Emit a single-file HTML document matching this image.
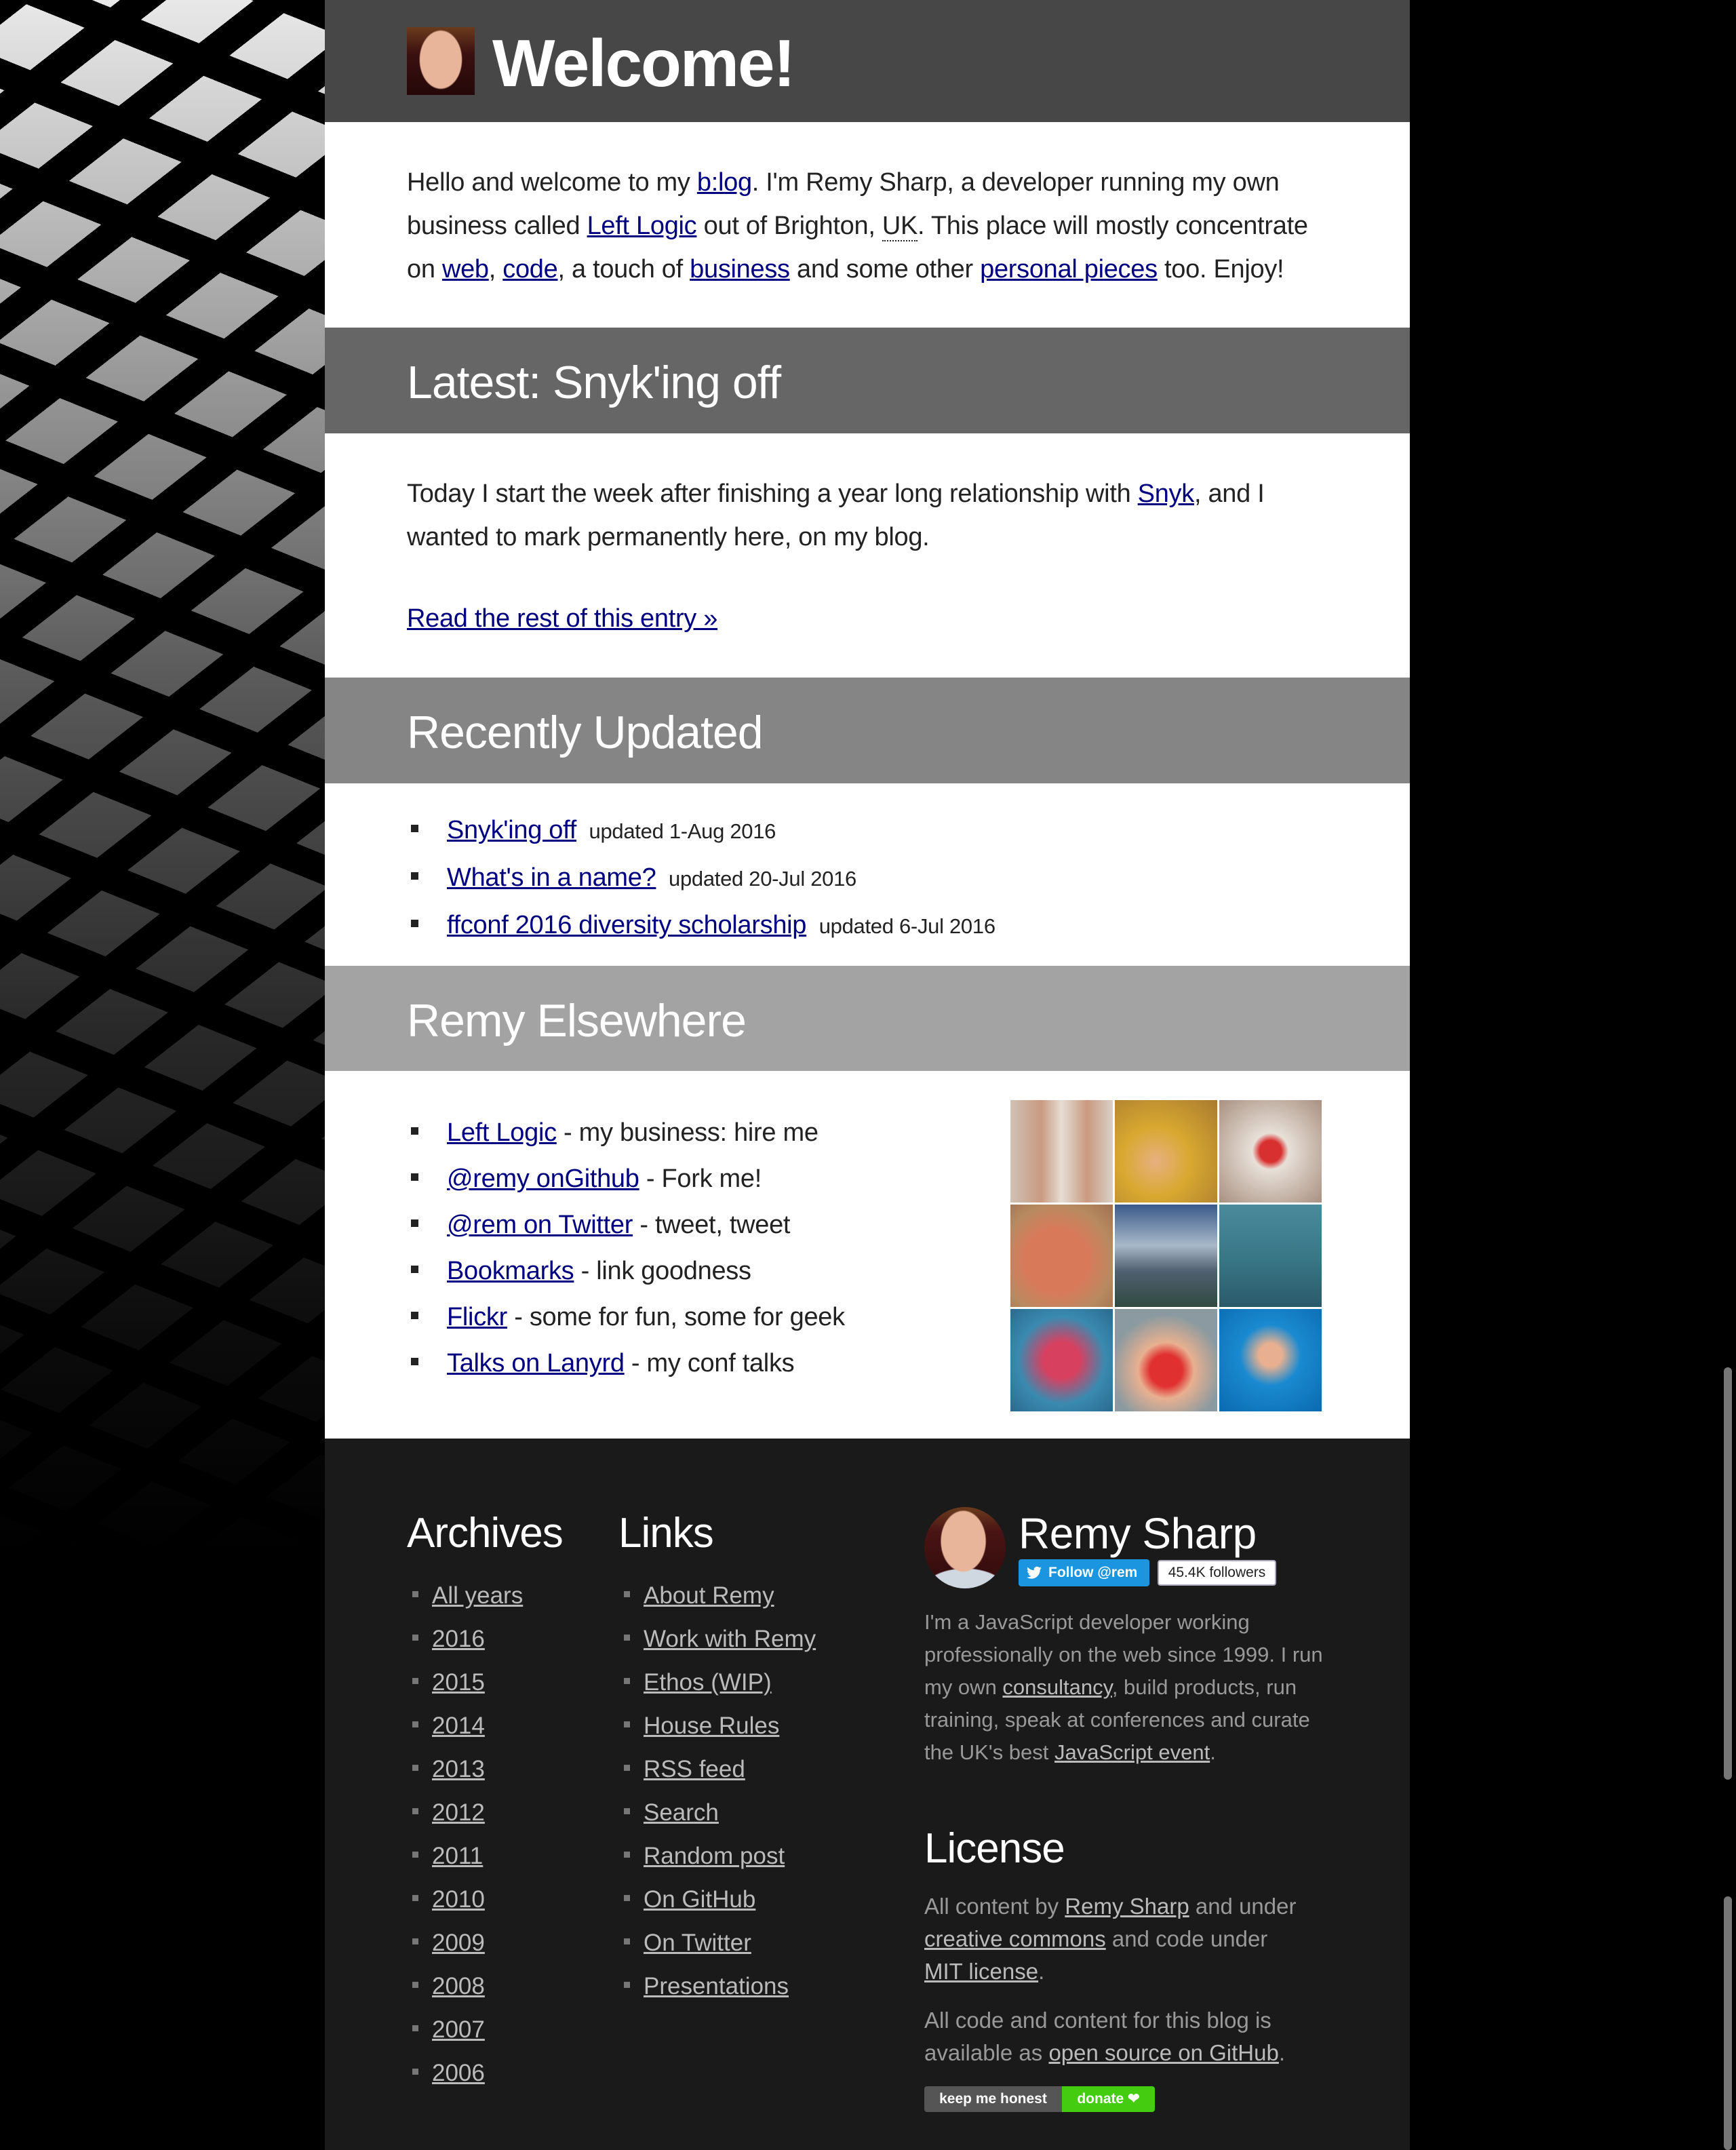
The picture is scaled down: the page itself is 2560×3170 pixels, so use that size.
<!DOCTYPE html>
<html><head><meta charset="utf-8">
<style>
*{margin:0;padding:0;box-sizing:border-box}
html,body{width:2560px;height:3170px;overflow:hidden;background:#000;font-family:"Liberation Sans",Arial,sans-serif}
#bgl{position:absolute;left:0;top:0;width:479px;height:3170px;
background:
repeating-linear-gradient(22deg,transparent 0 88px,#000 88px 130px),
repeating-linear-gradient(-38deg,transparent 0 80px,#000 80px 122px),
linear-gradient(to bottom,#e8e8e8 0,#a0a0a0 500px,#5a5a5a 1000px,#2a2a2a 1500px,#0a0a0a 2000px,#000 2300px);}
#main{position:absolute;left:479px;top:0;width:1600px;height:3170px;background:#1a1a1a}
.band{position:relative;color:#fff;padding-left:121px}
.white{background:#fff;position:relative;padding-left:121px;color:#222}
a{color:#000080;text-decoration:underline}
.p{font-size:38px;line-height:64px;letter-spacing:-0.3px}
h2{font-weight:normal;font-size:68px;letter-spacing:-1px}
ul{list-style:none}
.sq{display:inline-block;width:11px;height:11px;background:#222;margin-right:42px;vertical-align:middle;position:relative;top:-4px}
.ft a{color:#bbb}
.ft .sqf{display:inline-block;width:9px;height:9px;background:#777;margin-right:20px;vertical-align:middle;position:relative;top:-4px}
.ft li{font-size:35px;line-height:64px;color:#bbb}
.ft h3{font-weight:normal;font-size:62px;color:#fff;letter-spacing:-1px}
.grid{position:absolute;left:1011px;top:43px;width:460px;height:460px}
.grid div{position:absolute;width:151px;height:151px}
.sb{position:absolute;left:2542px;width:12px;background:#777;border-radius:6px}
</style></head><body>
<div id="bgl"></div>
<div id="main">
 <div class="band" style="background:#474747;height:180px">
  <div style="position:absolute;left:121px;top:40px;width:100px;height:100px;background:radial-gradient(ellipse 32px 44px at 50% 48%,#e8b49a 0 95%,transparent 100%),linear-gradient(#6b3b1d,#3a1010 40%,#250808);"></div>
  <div style="position:absolute;left:247px;top:38px;font-size:98px;font-weight:bold;letter-spacing:-2px;line-height:110px">Welcome!</div>
 </div>
 <div class="white" style="height:303px">
  <div class="p" style="position:absolute;top:57px;left:121px;width:1340px">Hello and welcome to my <a href="#">b:log</a>. I'm Remy Sharp, a developer running my own business called <a href="#">Left Logic</a> out of Brighton, <span style="border-bottom:2px dotted #222">UK</span>. This place will mostly concentrate on <a href="#">web</a>, <a href="#">code</a>, a touch of <a href="#">business</a> and some other <a href="#">personal pieces</a> too. Enjoy!</div>
 </div>
 <div class="band" style="background:#666;height:156px"><h2 style="position:absolute;top:40px;left:121px;line-height:82px">Latest: Snyk'ing off</h2></div>
 <div class="white" style="height:360px">
  <div class="p" style="position:absolute;top:57px;left:121px;width:1300px">Today I start the week after finishing a year long relationship with <a href="#">Snyk</a>, and I wanted to mark permanently here, on my blog.</div>
  <div class="p" style="position:absolute;top:241px;left:121px"><a href="#">Read the rest of this entry »</a></div>
 </div>
 <div class="band" style="background:#858585;height:156px"><h2 style="position:absolute;top:40px;left:121px;line-height:82px">Recently Updated</h2></div>
 <div class="white" style="height:269px">
  <ul style="position:absolute;top:35px;left:127px" class="p">
   <li style="line-height:68px"><span class="sq"></span><a href="#">Snyk'ing off</a> <span style="font-size:31px">&nbsp;updated 1-Aug 2016</span></li>
   <li style="line-height:68px"><span class="sq"></span><a href="#">What's in a name?</a> <span style="font-size:31px">&nbsp;updated 20-Jul 2016</span></li>
   <li style="line-height:68px"><span class="sq"></span><a href="#">ffconf 2016 diversity scholarship</a> <span style="font-size:31px">&nbsp;updated 6-Jul 2016</span></li>
  </ul>
 </div>
 <div class="band" style="background:#a3a3a3;height:155px"><h2 style="position:absolute;top:40px;left:121px;line-height:82px">Remy Elsewhere</h2></div>
 <div class="white" style="height:542px">
  <ul style="position:absolute;top:57px;left:127px" class="p">
   <li style="line-height:68px"><span class="sq"></span><a href="#">Left Logic</a> - my business: hire me</li>
   <li style="line-height:68px"><span class="sq"></span><a href="#">@remy onGithub</a> - Fork me!</li>
   <li style="line-height:68px"><span class="sq"></span><a href="#">@rem on Twitter</a> - tweet, tweet</li>
   <li style="line-height:68px"><span class="sq"></span><a href="#">Bookmarks</a> - link goodness</li>
   <li style="line-height:68px"><span class="sq"></span><a href="#">Flickr</a> - some for fun, some for geek</li>
   <li style="line-height:68px"><span class="sq"></span><a href="#">Talks on Lanyrd</a> - my conf talks</li>
  </ul>
  <div class="grid">
   <div style="left:0;top:0;background:linear-gradient(90deg,#cfc2b5,#c99a80 30%,#e6ddd5 50%,#c99a80 75%,#d9d0c8)"></div>
   <div style="left:154px;top:0;background:radial-gradient(circle at 40% 60%,#e8b080,#d8a830 40%,#a87a30)"></div>
   <div style="left:308px;top:0;background:radial-gradient(circle at 50% 50%,#d83030 0 15%,#e8e0d8 25%,#a89080)"></div>
   <div style="left:0;top:154px;background:radial-gradient(ellipse at 45% 55%,#d87a5a 0 40%,#b88a60 70%,#a07050)"></div>
   <div style="left:154px;top:154px;background:linear-gradient(#3a5a8a,#a8b8c8 40%,#506070 65%,#304a40)"></div>
   <div style="left:308px;top:154px;background:linear-gradient(#4a8a9a,#3a7888 50%,#2a5a6a)"></div>
   <div style="left:0;top:308px;background:radial-gradient(circle at 50% 50%,#d84060 0 25%,#3a8ab0 60%,#2a6a90)"></div>
   <div style="left:154px;top:308px;background:radial-gradient(circle at 50% 60%,#e03030 0 20%,#e8b090 35%,#8a9aa0 70%)"></div>
   <div style="left:308px;top:308px;background:radial-gradient(circle at 50% 45%,#e8b090 0 15%,#1a8ad0 40%,#0a6ab0)"></div>
  </div>
 </div>
 <div class="ft" style="position:relative;height:1049px;background:#1a1a1a">
  <h3 style="position:absolute;left:121px;top:100px;line-height:80px">Archives</h3>
  <ul style="position:absolute;left:129px;top:200px">
   <li><span class="sqf"></span><a href="#">All years</a></li>
   <li><span class="sqf"></span><a href="#">2016</a></li><li><span class="sqf"></span><a href="#">2015</a></li>
   <li><span class="sqf"></span><a href="#">2014</a></li><li><span class="sqf"></span><a href="#">2013</a></li>
   <li><span class="sqf"></span><a href="#">2012</a></li><li><span class="sqf"></span><a href="#">2011</a></li>
   <li><span class="sqf"></span><a href="#">2010</a></li><li><span class="sqf"></span><a href="#">2009</a></li>
   <li><span class="sqf"></span><a href="#">2008</a></li><li><span class="sqf"></span><a href="#">2007</a></li>
   <li><span class="sqf"></span><a href="#">2006</a></li>
  </ul>
  <h3 style="position:absolute;left:433px;top:100px;line-height:80px">Links</h3>
  <ul style="position:absolute;left:441px;top:200px">
   <li><span class="sqf"></span><a href="#">About Remy</a></li><li><span class="sqf"></span><a href="#">Work with Remy</a></li>
   <li><span class="sqf"></span><a href="#">Ethos (WIP)</a></li><li><span class="sqf"></span><a href="#">House Rules</a></li>
   <li><span class="sqf"></span><a href="#">RSS feed</a></li><li><span class="sqf"></span><a href="#">Search</a></li>
   <li><span class="sqf"></span><a href="#">Random post</a></li><li><span class="sqf"></span><a href="#">On GitHub</a></li>
   <li><span class="sqf"></span><a href="#">On Twitter</a></li><li><span class="sqf"></span><a href="#">Presentations</a></li>
  </ul>
  <div style="position:absolute;left:884px;top:101px;width:120px;height:120px;border-radius:50%;overflow:hidden;background:radial-gradient(ellipse 34px 46px at 48% 42%,#e8b49a 0 95%,transparent 100%),radial-gradient(ellipse 60px 30px at 50% 100%,#cfd8e0 0 95%,transparent 100%),linear-gradient(#6b3b1d,#4a1414 30%,#300a0a)"></div>
  <div style="position:absolute;left:1023px;top:100px;font-size:64px;color:#fff;line-height:80px;letter-spacing:-0.5px">Remy Sharp</div>
  <div style="position:absolute;left:1023px;top:178px;width:193px;height:40px;background:#1b95e0;border-radius:4px;color:#fff;font-weight:bold;font-size:21px;line-height:40px;padding-left:44px">
   <svg style="position:absolute;left:12px;top:10px" width="22" height="20" viewBox="0 0 24 20"><path fill="#fff" d="M24 2.4a10 10 0 0 1-2.8.8A5 5 0 0 0 23.3.4a10 10 0 0 1-3.1 1.2A4.9 4.9 0 0 0 11.8 6 14 14 0 0 1 1.7.9a4.9 4.9 0 0 0 1.5 6.6 5 5 0 0 1-2.2-.6 4.9 4.9 0 0 0 3.9 4.8 5 5 0 0 1-2.2.1 4.9 4.9 0 0 0 4.6 3.4A9.9 9.9 0 0 1 0 17.2 14 14 0 0 0 7.5 19.4c9.1 0 14-7.5 14-14v-.6A10 10 0 0 0 24 2.4z"/></svg>Follow @rem</div>
  <div style="position:absolute;left:1228px;top:179px;width:175px;height:38px;background:#fff;border:2px solid #aab;border-radius:4px;color:#222;font-size:21px;line-height:34px;text-align:center">45.4K followers</div>
  <div style="position:absolute;left:884px;top:247px;width:590px;font-size:31px;line-height:48px;color:#999">I'm a JavaScript developer working professionally on the web since 1999. I run my own <a href="#">consultancy</a>, build products, run training, speak at conferences and curate the UK's best <a href="#">JavaScript event</a>.</div>
  <h3 style="position:absolute;left:884px;top:565px;line-height:80px">License</h3>
  <div style="position:absolute;left:884px;top:666px;width:560px;font-size:33px;line-height:48px;color:#999">All content by <a href="#">Remy Sharp</a> and under <a href="#">creative commons</a> and code under <a href="#">MIT license</a>.</div>
  <div style="position:absolute;left:884px;top:834px;width:580px;font-size:33px;line-height:48px;color:#999">All code and content for this blog is available as <a href="#">open source on GitHub</a>.</div>
  <div style="position:absolute;left:884px;top:955px;height:38px;width:340px;border-radius:4px;overflow:hidden;font-size:21px;font-weight:bold;line-height:38px;color:#fff">
   <span style="display:inline-block;width:203px;background:#555;text-align:center">keep me honest</span><span style="display:inline-block;width:137px;background:#4c1;text-align:center;position:absolute;left:203px">donate ❤</span>
  </div>
 </div>
</div>
<div class="sb" style="top:2016px;height:608px"></div>
<div class="sb" style="top:2796px;height:374px"></div>
</body></html>
